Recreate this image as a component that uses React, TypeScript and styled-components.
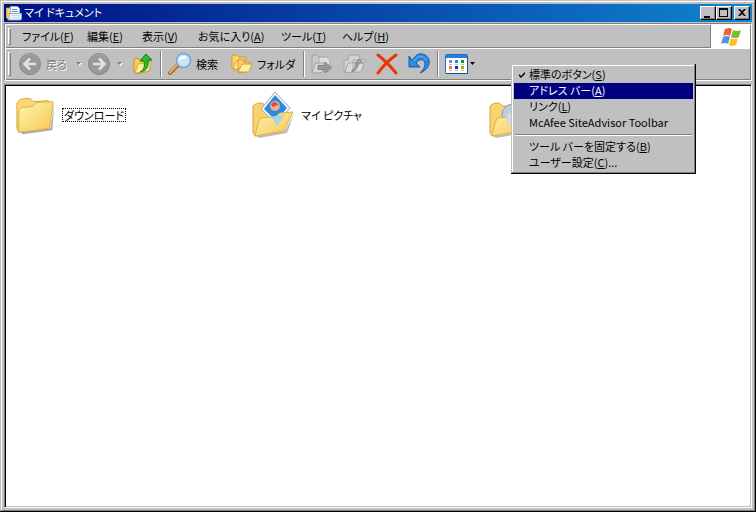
import React from 'react';
import styled, { createGlobalStyle, css } from 'styled-components';

const silver = '#c0c0c0';
const shade = '#808080';

const GlobalStyle = createGlobalStyle`
  * { box-sizing: border-box; }
  body {
    margin: 0;
    background: ${silver};
    color: #000;
    font: 11px/16px "Noto Sans CJK JP", sans-serif;
    font-feature-settings: "palt";
  }
  button { font: inherit; font-feature-settings: inherit; color: inherit; background: none; border: 0; padding: 0; margin: 0; }
  svg { display: block; flex: none; }
`;

const raised = css`
  border: 1px solid;
  border-color: #fff #000 #000 #fff;
  box-shadow: inset -1px -1px ${shade};
`;

const Window = styled.main`
  position: relative;
  height: 100vh;
  display: flex;
  flex-direction: column;
  padding: 4px;
  background: ${silver};
  box-shadow: inset -1px -1px #000, inset 1px 1px ${silver}, inset -2px -2px ${shade}, inset 2px 2px #fff;
`;

const TitleBar = styled.header`
  display: flex;
  align-items: center;
  height: 18px;
  flex: none;
  padding: 0 2px;
  gap: 2px;
  color: #fff;
  background: linear-gradient(90deg, #000f85, #1084d0);
`;

const Title = styled.h1`
  flex: 1;
  margin: 0;
  padding-bottom: 2px;
  font-size: 11px;
  font-weight: 400;
`;

const Controls = styled.div`
  display: flex;
`;

const ControlButton = styled.button<{ $apart?: boolean }>`
  ${raised}
  width: 16px;
  height: 14px;
  color: #000;
  background: ${silver};
  margin-left: ${p => (p.$apart ? 2 : 0)}px;
`;

const Bars = styled.div`
  flex: none;
  margin: 1px 0 3px;
  border: 1px solid;
  border-color: ${shade} #fff #fff ${shade};
  box-shadow: inset 1px 1px #fff, inset -1px -1px ${shade};
  padding: 1px;
`;

const MenuRow = styled.div`
  display: flex;
  height: 24px;
  border-bottom: 1px solid #fff;
  box-shadow: inset 0 -1px ${shade};
`;

const Grip = styled.span`
  width: 3px;
  flex: none;
  margin: 3px 3px 3px 2px;
  border: 1px solid;
  border-color: #fff ${shade} ${shade} #fff;
`;

const MenuBar = styled.nav`
  display: flex;
  align-items: center;
  flex: 1;
  padding-bottom: 2px;
`;

const MenuButton = styled.button<{ $width: number }>`
  width: ${p => p.$width}px;
  padding-left: 8px;
  height: 20px;
  text-align: left;
  white-space: nowrap;
`;

const Logo = styled.div`
  display: grid;
  place-items: center;
  width: 40px;
  background: #fff;
  border-left: 1px solid ${shade};
`;

const ToolRow = styled.div`
  display: flex;
  align-items: center;
  height: 30px;
`;

const ToolGrip = styled(Grip)`
  align-self: stretch;
  margin-right: 7px;
`;

const ToolButton = styled.button<{ $width: number; $tight?: boolean }>`
  display: flex;
  align-items: center;
  gap: ${p => (p.$tight ? 1 : 4)}px;
  width: ${p => p.$width}px;
  height: 26px;
  flex: none;
  white-space: nowrap;

  &:disabled {
    color: ${shade};
    text-shadow: 1px 1px #fff;
  }
`;

const Divider = styled.span`
  width: 2px;
  height: 26px;
  flex: none;
  margin: 0 6px 0 4px;
  border-left: 1px solid ${shade};
  border-right: 1px solid #fff;
`;

const Files = styled.section`
  flex: 1;
  display: grid;
  grid-template-columns: repeat(auto-fill, 237px);
  align-content: start;
  padding: 6px 0 0 8px;
  background: #fff;
  border: 1px solid;
  border-color: ${shade} #fff #fff ${shade};
  box-shadow: inset 1px 1px #000, inset -1px -1px ${silver};
`;

const FileItem = styled.button`
  display: flex;
  align-items: center;
  gap: 3px;
  height: 48px;
  padding-left: 2px;
  text-align: left;
`;

const FileName = styled.span<{ $focused?: boolean }>`
  line-height: 12px;
  padding: 0 1px;
  border: 1px dotted ${p => (p.$focused ? '#000' : 'transparent')};
`;

const Popup = styled.div`
  position: absolute;
  top: 64px;
  left: 511px;
  width: 185px;
  padding: 3px;
  background: ${silver};
  box-shadow: inset -1px -1px #000, inset 1px 1px ${silver}, inset -2px -2px ${shade}, inset 2px 2px #fff;
`;

const PopupItem = styled.button<{ $active?: boolean }>`
  display: flex;
  width: 100%;
  height: 16px;
  line-height: 14px;
  white-space: nowrap;
  color: ${p => (p.$active ? '#fff' : '#000')};
  background: ${p => (p.$active ? '#000080' : 'transparent')};
`;

const CheckSlot = styled.span`
  width: 15px;
  padding: 5px 0 0 5px;
`;

const PopupLine = styled.hr`
  height: 2px;
  margin: 3px 1px;
  border: 0;
  border-top: 1px solid ${shade};
  border-bottom: 1px solid #fff;
`;

const Label = ({ text, hot, tail = ')' }: { text: string; hot?: string; tail?: string }) => (
  <span>{text}{hot && <>(<u>{hot}</u>{tail}</>}</span>
);

const menus = [
  { text: 'ファイル', hot: 'F', width: 65 },
  { text: '編集', hot: 'E', width: 55 },
  { text: '表示', hot: 'V', width: 56 },
  { text: 'お気に入り', hot: 'A', width: 83 },
  { text: 'ツール', hot: 'T', width: 61 },
  { text: 'ヘルプ', hot: 'H', width: 61 },
];

const TitleIcon = () => (
  <svg width="16" height="16" viewBox="0 0 16 16">
    <path d="M1 3h5v11H2L0 12V4z" fill="#f6d878" stroke="#c99a30" />
    <path d="M4.500 1.500h7l2 2v8h-9z" fill="#fff" stroke="#9db4cf" />
    <path d="M6 4.500h5M6 6.500h6" stroke="#5b87bd" />
    <path d="M3 8.500h12.500V14l-1 1H2z" fill="#eef5fd" stroke="#86a9d8" />
    <path d="M1 5v8l2 2V8" fill="#ffe493" stroke="#d8ab40" />
    <path d="M5 10.500h9M5 12.500h9" stroke="#c4dbf4" />
  </svg>
);

const Arrow = ({ flip }: { flip?: boolean }) => (
  <svg width="24" height="24" viewBox="0 0 24 24">
    <circle cx="12" cy="12" r="10.5" fill="#999" stroke="#868686" />
    <path d="M4 7a9 9 0 0 1 15-1" stroke="#aaa" fill="none" />
    <path d={flip ? 'M6 12h11M12 6.5l5.5 5.5-5.5 5.5' : 'M18 12H7M12 6.5 6.5 12l5.5 5.5'} fill="none" stroke="#e2e2e2" strokeWidth="2.6" />
  </svg>
);

const Drop = ({ dim }: { dim?: boolean }) => (
  <svg width="6" height="4" viewBox="0 0 6 4">
    {dim && <path d="M1 1h5L3.5 4z" fill="#fff" />}
    <path d="M0 0h5L2.5 3z" fill={dim ? shade : '#000'} />
  </svg>
);

const UpFolder = () => (
  <svg width="20" height="22" viewBox="0 0 20 22">
    <path d="M1 7l2-2 4 1 1 2 9-1v11L3 21l-2-2z" fill="#f3cf5a" stroke="#c4952b" />
    <path d="M2 20 5 11l13-2-2 9z" fill="#ffe993" stroke="#d9ae3b" />
    <path d="M7 19c4-2 5-5 4-11H7l6-7 6 6h-4c1 6-1 11-8 12z" fill="#35b82c" stroke="#16811a" />
  </svg>
);

const Search = () => (
  <svg width="24" height="24" viewBox="0 0 24 24">
    <path d="M2 21l8-8" stroke="#a86b31" strokeWidth="4" strokeLinecap="round" />
    <path d="M2 20.5 9 13" stroke="#f1ad64" strokeWidth="2" strokeLinecap="round" />
    <circle cx="15.5" cy="8.5" r="7" fill="#c6e5fb" stroke="#73a5d9" strokeWidth="1.5" />
    <path d="M11 9a5 5 0 0 1 5-5q3 0 3 2-4 0-8 3" fill="#fff" />
  </svg>
);

const Folders = () => (
  <svg width="22" height="20" viewBox="0 0 22 20">
    <path d="M1 2l1-1h4l2 2h6v9L3 16l-2-2z" fill="#f8d467" stroke="#d39b2d" />
    <path d="M2 15 5 7h10l-3 8z" fill="#ffe896" stroke="#dba83d" />
    <path d="M7 7l1-2 4 1 1 2h6v8L8 19l-1-1z" fill="#f8d467" stroke="#d39b2d" />
    <path d="M7 18l4-8h10l-3 8z" fill="#ffef9d" stroke="#d39b2d" />
  </svg>
);

const MoveTo = () => (
  <svg width="22" height="21" viewBox="0 0 22 21">
    <path d="M1 3l1-2h4l2 2h6v14H1z" fill="#c9c9c9" stroke="#a2a2a2" />
    <path d="M8 3h8l3 3v11H8z" fill="#dedede" stroke="#aaa" />
    <path d="M1 19 4 9h10l-3 10z" fill="#d5d5d5" stroke="#a0a0a0" />
    <path d="M7 11.500h7V8l6.500 5.500L14 19v-3.500H7z" fill="#999" stroke="#858585" />
  </svg>
);

const CopyTo = () => (
  <svg width="24" height="21" viewBox="0 0 24 21">
    <path d="M1 6h4l1-5h9l2 3v12L3 19l-2-2z" fill="#d3d3d3" stroke="#a5a5a5" />
    <path d="M2 18 5 9h8l-3 10zM10 6h12l-4 12h-8z" fill="#dadada" stroke="#a6a6a6" />
    <path d="M9 16c4 0 2-5 6-7h-3l4-4 4 4h-3c-3 2-2 7-8 9z" fill="#a2a2a2" stroke="#8a8a8a" />
  </svg>
);

const Delete = () => (
  <svg width="22" height="22" viewBox="0 0 22 22">
    <path d="M2 2q9 7 18 18M20 2Q9 10 2 20" fill="none" stroke="#e93607" strokeWidth="3" strokeLinecap="round" />
  </svg>
);

const Undo = () => (
  <svg width="22" height="22" viewBox="0 0 22 22">
    <path d="M1 3v11h11l-4-4c4-5 9-4 9 1 0 3-2 6-5 9 13-5 11-18 2-19C9 0 7 4 4 7z" fill="#2e8ade" stroke="#155bb0" strokeLinejoin="round" />
    <path d="M6 8c4-6 9-6 12-1" stroke="#69b9f5" fill="none" />
  </svg>
);

const Views = () => (
  <svg width="24" height="20" viewBox="0 0 24 20">
    <rect x=".5" y=".5" width="22" height="19" rx="1" fill="#fff" stroke="#1d6ec9" />
    <path d="M1 1h21v3H1z" fill="#2a7be0" />
    <path d="M22.5 3v16.500H1" stroke="#1a4f96" fill="none" />
    <path d="M4 6h3v3H4z" fill="#8b8bc4" /><path d="M10 6h3v3h-3z" fill="#1889e0" /><path d="M16 6h3v3h-3z" fill="#129a12" />
    <path d="M4 12h3v3H4z" fill="#ff7041" /><path d="M10 12h3v3h-3z" fill="#0b34a8" /><path d="M16 12h3v3h-3z" fill="#d49b00" />
    <path d="M4 10.500h3M10 10.500h3M16 10.500h3M4 16.500h3M10 16.500h3M16 16.500h3" stroke="#bbb" />
  </svg>
);

const WindowsFlag = () => (
  <svg width="20" height="18" viewBox="0 0 20 18">
    <path d="M4 1q4-2 7 0L9 8Q6 6 2 8z" fill="#ed6331" />
    <path d="M12 2q4 2 8 0l-2 7q-4 2-8 0z" fill="#77bd36" />
    <path d="M2 9q4-2 7 0l-2 7q-3-2-7 0z" fill="#5693df" />
    <path d="M10 10q4 2 7 0l-2 7q-4 2-7 0z" fill="#f9c525" />
  </svg>
);

const ClosedFolder = () => (
  <svg width="44" height="44" viewBox="-1 -3 46 46">
    <defs>
      <linearGradient id="front" x1="0" y1="0" x2="1" y2="1">
        <stop offset="0" stopColor="#fff3b4" /><stop offset="1" stopColor="#f5c84e" />
      </linearGradient>
    </defs>
    <path d="M5 38 36 34 40 9 38 36 7 40z" fill="#aaa" />
    <path d="M1 8 4 4q5-2 11-1l3 3 16-1 1 3-2 26L3 38 1 34z" fill="#fbd876" stroke="#d8a637" />
    <path d="M3 15q1-2 4-3l11-1 3-4 17-1q1 0 1 2l-4 26L3 38z" fill="url(#front)" stroke="#dfb044" />
  </svg>
);

const OpenFolder = ({ kind }: { kind: 'picture' | 'music' }) => (
  <svg width="44" height="48" viewBox="0 0 44 48">
    <defs>
      <linearGradient id={kind} x1="0" y1="0" x2="1" y2="1">
        <stop offset="0" stopColor="#fff3b0" /><stop offset="1" stopColor="#f5c54c" />
      </linearGradient>
    </defs>
    <path d="M4 45 33 40 42 23 35 42 7 47z" fill="#bbb" />
    <path d="M1 15q2-3 9-3l4 3h18v22L3 45 1 42z" fill="#f9d36b" stroke="#d8a637" />
    {kind === 'picture' ? (
      <>
        <path d="M23 1 38 17 24 33 9 18z" fill="#f4f8fb" stroke="#91a9bb" />
        <path d="M23 4 35 17 24 30 12 18z" fill="#2b8adb" />
        <circle cx="23" cy="15" r="5" fill="#efad9d" />
        <path d="M19 14q2-5 6-2l2 3-2-1-4 2z" fill="#cc513b" />
      </>
    ) : <circle cx="24" cy="24" r="11" fill="#bccbe6" stroke="#7f9cc7" />}
    <path d="M3 45Q5 34 8 27l15-1 5-4 13-1-9 19z" fill={`url(#${kind})`} stroke="#dfb044" />
    {kind === 'picture' ? <path d="m19 26 14-3-8 12z" fill="#a9d2e8" /> : <circle cx="24" cy="28" r="7" fill="#d8dbd7" />}
  </svg>
);

export default function App() {
  return (
    <>
      <GlobalStyle />
      <Window>
        <TitleBar>
          <TitleIcon />
          <Title>マイ ドキュメント</Title>
          <Controls>
            <ControlButton aria-label="最小化">
              <svg width="14" height="12"><path d="M3 9h6v2H3z" /></svg>
            </ControlButton>
            <ControlButton aria-label="最大化">
              <svg width="14" height="12"><path d="M2 1h9v9H2zM3 3v6h7V3z" fillRule="evenodd" /></svg>
            </ControlButton>
            <ControlButton aria-label="閉じる" $apart>
              <svg width="14" height="12"><path d="M3 2h2l2 2 2-2h2L8 5.500 11 9H9L7 7 5 9H3l3-3.500z" /></svg>
            </ControlButton>
          </Controls>
        </TitleBar>
        <Bars>
          <MenuRow>
            <Grip />
            <MenuBar>
              {menus.map(({ text, hot, width }) => (
                <MenuButton key={hot} $width={width}><Label text={text} hot={hot} /></MenuButton>
              ))}
            </MenuBar>
            <Logo><WindowsFlag /></Logo>
          </MenuRow>
          <ToolRow role="toolbar">
            <ToolGrip />
            <ToolButton $width={58} disabled><Arrow />戻る</ToolButton>
            <ToolButton $width={11} disabled aria-label="戻る履歴"><Drop dim /></ToolButton>
            <ToolButton $width={30} disabled aria-label="進む"><Arrow flip /></ToolButton>
            <ToolButton $width={16} disabled aria-label="進む履歴"><Drop dim /></ToolButton>
            <ToolButton $width={23} aria-label="上へ"><UpFolder /></ToolButton>
            <Divider />
            <ToolButton $width={63}><Search />検索</ToolButton>
            <ToolButton $width={68}><Folders />フォルダ</ToolButton>
            <Divider />
            <ToolButton $width={32} disabled aria-label="移動"><MoveTo /></ToolButton>
            <ToolButton $width={33} disabled aria-label="コピー"><CopyTo /></ToolButton>
            <ToolButton $width={32} aria-label="削除"><Delete /></ToolButton>
            <ToolButton $width={25} aria-label="元に戻す"><Undo /></ToolButton>
            <Divider />
            <ToolButton $width={34} $tight aria-label="表示"><Views /><Drop /></ToolButton>
          </ToolRow>
        </Bars>
        <Files>
          <FileItem><ClosedFolder /><FileName $focused>ダウンロード</FileName></FileItem>
          <FileItem><OpenFolder kind="picture" /><FileName>マイ ピクチャ</FileName></FileItem>
          <FileItem aria-label="マイ ミュージック"><OpenFolder kind="music" /></FileItem>
        </Files>
        <Popup role="menu">
          <PopupItem role="menuitemcheckbox" aria-checked="true">
            <CheckSlot>
              <svg width="6" height="6" viewBox="0 0 6 6"><path d="M0 2v2l2 2 4-4V0L2 4z" /></svg>
            </CheckSlot>
            <Label text="標準のボタン" hot="S" />
          </PopupItem>
          <PopupItem role="menuitemcheckbox" $active><CheckSlot /><Label text="アドレス バー" hot="A" /></PopupItem>
          <PopupItem role="menuitemcheckbox"><CheckSlot /><Label text="リンク" hot="L" /></PopupItem>
          <PopupItem role="menuitemcheckbox"><CheckSlot /><Label text="McAfee SiteAdvisor Toolbar" /></PopupItem>
          <PopupLine />
          <PopupItem role="menuitem"><CheckSlot /><Label text="ツール バーを固定する" hot="B" /></PopupItem>
          <PopupItem role="menuitem"><CheckSlot /><Label text="ユーザー設定" hot="C" tail=")..." /></PopupItem>
        </Popup>
      </Window>
    </>
  );
}
